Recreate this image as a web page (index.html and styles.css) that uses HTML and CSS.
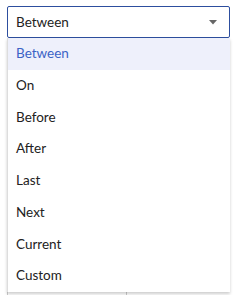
FILE: index.html
```html
<!DOCTYPE html>
<html lang="en">
<head>
    <meta charset="UTF-8">
    <meta name="viewport" content="width=device-width, initial-scale=1.0">
    <title>Date filter</title>
    <link rel="stylesheet" href="styles.css">
</head>
<body>
    <div class="picker">
        <div class="select">
            <span>Between</span>
            <svg class="caret" width="8" height="5" viewBox="0 0 8 5"><path d="M0 0h8L4 4.5z" fill="#666"/></svg>
        </div>
        <ul class="menu">
            <li class="active">Between</li>
            <li>On</li>
            <li>Before</li>
            <li>After</li>
            <li>Last</li>
            <li>Next</li>
            <li>Current</li>
            <li>Custom</li>
        </ul>
        <div class="grid">
            <div class="cell"></div>
            <div class="cell"></div>
        </div>
    </div>
</body>
</html>
```
FILE: styles.css
```css
body {margin: 0; background: #fff; font-family: Lato, "Noto Sans", sans-serif; font-size: 13.5px; color: #222;}
.picker {position: relative; padding: 6px 8px 0 7px;}
.select {height: 30px; border: 1px solid #2d4e9e; border-radius: 2px; display: flex; align-items: center; justify-content: space-between; padding: 0 12px 0 8px;}
.caret {margin-top: 1px;}
.menu {position: absolute; top: 38px; left: 7px; right: 8px; margin: 0; padding: 0; list-style: none; background: #fff; border-left: 1px solid #ddd; box-shadow: 0 2px 3px rgba(0,0,0,0.2); z-index: 2;}
.menu li {height: 31.75px; line-height: 31.75px; padding-left: 8px;}
.menu li.active {background: #eef0fb; color: #3b63c6;}
.grid {display: grid; grid-template-columns: 119px 1fr; height: 257px;}
.cell {border-left: 1px solid #ccc;}
```
